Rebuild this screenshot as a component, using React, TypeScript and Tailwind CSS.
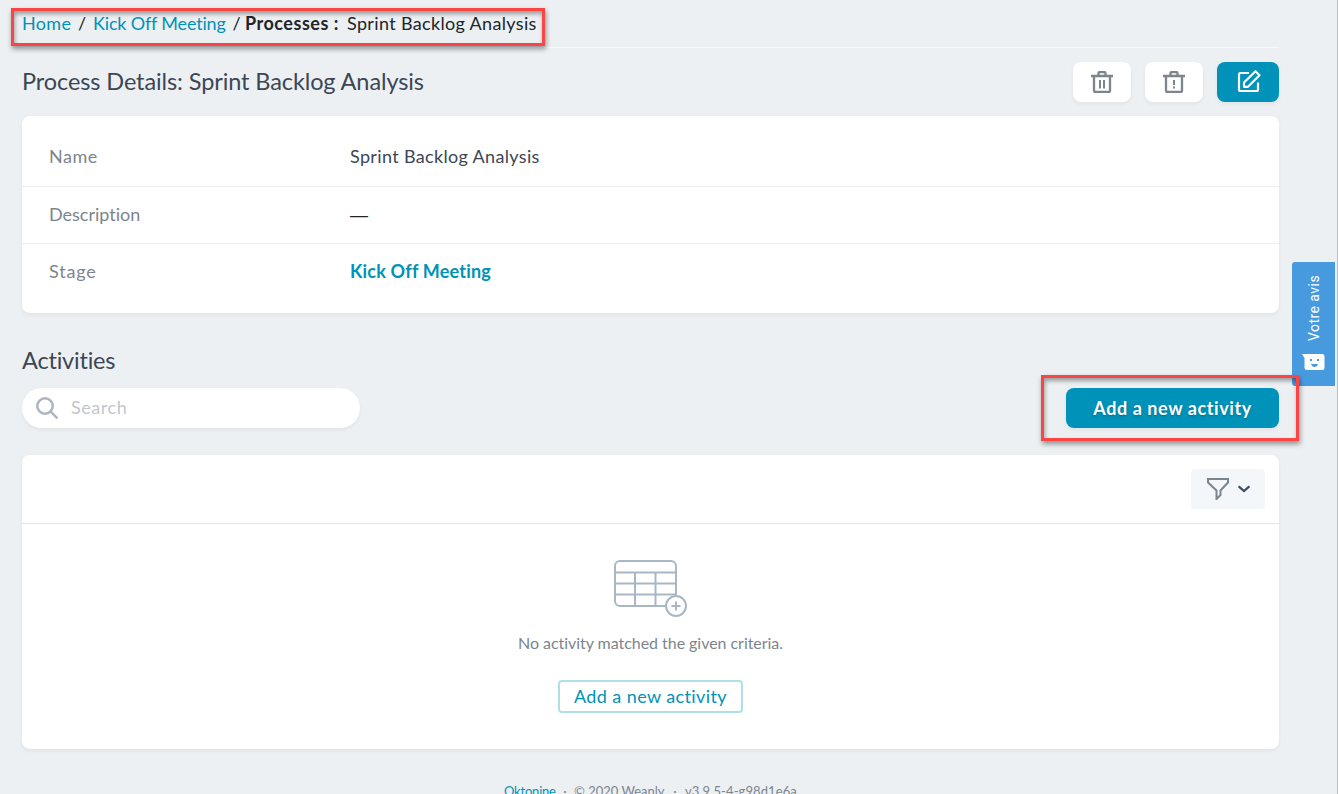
import React from "react";

function TrashIcon({ alert = false }: { alert?: boolean }) {
  return (
    <svg width="22" height="22" viewBox="0 0 22 22" fill="none" stroke="#7c858e" strokeWidth="2.3">
      <path d="M0 5h22M3 5v14.500q0 1.500 1.500 1.500h13q1.500 0 1.500-1.500V5M7.500 5V2.500q0-1.500 1.500-1.500h4q1.500 0 1.500 1.500V5" />
      {alert ? <path strokeWidth="2" d="M11 9v5M11 15.500v2" /> : <path strokeWidth="2" d="M9 9v8.500M13 9v8.500" />}
    </svg>
  );
}

function EditIcon() {
  return (
    <svg className="ml-[2px]" width="24" height="24" viewBox="0 0 24 24" fill="none" stroke="#fff" strokeWidth="2.2" strokeLinejoin="round">
      <path d="M12 3H3.500Q2 3 2 4.500v15Q2 21 3.500 21h16q1.500 0 1.500-1.500V12.500" />
      <path d="M7 16.800v-4.300L18.500 1.200l4 4L11 16.800z" />
    </svg>
  );
}

function Row({ label, className, children }: { label: React.ReactNode; className: string; children: React.ReactNode }) {
  return (
    <div className={`flex px-[27px] pt-[14px] text-[18px] leading-[27px] ${className}`}>
      <div className="w-[301px] text-[#7c858e]">{label}</div>
      <div>{children}</div>
    </div>
  );
}

export default function App() {
  return (
    <div className="relative h-[794px] w-[1338px] overflow-hidden border-r border-[#bfc1c3] bg-[#ecf0f3] font-['Lato',sans-serif] text-[#212529] [font-variant-ligatures:none]">
      <main className="ml-[22px] w-[1257px]">
        <nav className="flex h-[48px] border-b border-[#f6f8fa] pt-[10px] text-[18px] leading-[27px] whitespace-pre">
          <span className="w-[49px] tracking-[0.350px] text-[#0092b8]">Home</span>
          <span className="w-[22px] text-center">/</span>
          <span className="w-[135px] tracking-[-0.170px] text-[#0092b8]">Kick Off Meeting</span>
          <span className="w-[17px] text-center">/</span>
          <b className="w-[94px] tracking-[0.510px]">Processes :</b>
          <span className="ml-[8px] tracking-[0.340px]">Sprint Backlog Analysis</span>
        </nav>
        <header className="mt-[14px] flex h-[40px] items-center">
          <h1 className="mb-[2px] flex-1 text-[23.500px] leading-[38px] tracking-[-0.100px] text-[#3c4655]">Process Details: Sprint Backlog Analysis</h1>
          <div className="flex gap-[14px]">
            <button className="flex h-[40px] w-[58px] items-center justify-center rounded-[8px] bg-white shadow-[0_2px_4px_#0000000d]"><TrashIcon /></button>
            <button className="flex h-[40px] w-[58px] items-center justify-center rounded-[8px] bg-white shadow-[0_2px_4px_#0000000d]"><TrashIcon alert /></button>
            <button className="flex h-[40px] w-[62px] items-center justify-center rounded-[8px] bg-[#0092b8] shadow-[0_2px_4px_#0000000d]"><EditIcon /></button>
          </div>
        </header>
        <section className="mt-[14px] h-[197px] rounded-[8px] bg-white pt-[13px] shadow-[0_2px_4px_#0000000d]">
          <Row label={<span className="tracking-[0.500px]">Name</span>} className="h-[58px] border-b border-[#eceeef]"><span className="tracking-[0.340px] text-[#3c4655]">Sprint Backlog Analysis</span></Row>
          <Row label={<span>Description</span>} className="h-[57px] border-b border-[#eceeef]"><span className="font-['Liberation_Sans',sans-serif]">—</span></Row>
          <Row label={<span className="tracking-[0.800px]">Stage</span>} className="h-[56px]"><b className="tracking-[0.200px] text-[#0092b8]">Kick Off Meeting</b></Row>
        </section>
        <h2 className="mt-[29px] text-[23.500px] leading-[36px] tracking-[-0.200px] text-[#3c4655]">Activities</h2>
        <div className="mt-[10px] flex h-[40px] justify-between">
          <div className="flex w-[338px] items-center rounded-full bg-white pl-[14px] text-[18px] text-[#c2c6cb] shadow-[0_2px_4px_#0000000d]">
            <svg width="22" height="22" viewBox="0 0 22 22" fill="none" stroke="#aeb5bc" strokeWidth="2.500"><circle cx="9" cy="9" r="7.750" /><path d="m14.700 14.700 6.800 6.800" /></svg>
            <span className="mb-[1px] ml-[13px] tracking-[0.550px]">Search</span>
          </div>
          <button className="w-[213px] rounded-[8px] bg-[#0092b8] text-[18px] font-bold tracking-[0.580px] text-white shadow-[0_2px_4px_#0000000d] [text-shadow:0_1px_2px_#00000040]">Add a new activity</button>
        </div>
        <section className="mt-[27px] h-[294px] rounded-[8px] bg-white shadow-[0_2px_4px_#0000000d]">
          <div className="flex h-[69px] justify-end border-b border-[#e3e7eb] pt-[14px] pr-[14px]">
            <button className="flex h-[40px] w-[74px] items-center justify-center gap-[9px] rounded-[4px] bg-[#f3f7fa]">
              <svg width="22" height="22" viewBox="0 0 22 22" fill="none" stroke="#7c858e" strokeWidth="2"><path d="M1 1h20v3.500l-7.500 8v4.500l-4 4v-8.500L1 4.500z" /></svg>
              <svg width="12" height="8" viewBox="0 0 12 8" fill="none" stroke="#3c4b5f" strokeWidth="2.200"><path d="m.6 1.300 5.400 4.700 5.400-4.700" /></svg>
            </button>
          </div>
          <div className="flex flex-col items-center pt-[36px]">
            <svg width="73" height="57" viewBox="0 0 73 57" fill="none" stroke="#a9b7c4" strokeWidth="2"><rect x="1" y="1" width="61" height="45" rx="5" /><path d="M1 12.500h61M1 23.500h61M1 34.500h61M21 12.500V46M41.500 12.500V46" /><circle cx="62" cy="46" r="10" fill="#fff" /><path d="M57.500 46h9M62 41.500v9" /></svg>
            <p className="mt-[14px] text-[16px] leading-[24px] tracking-[-0.040px] text-[#7c858e]">No activity matched the given criteria.</p>
            <button className="mt-[25px] h-[33px] w-[185px] rounded-[4px] border-2 border-[#aee0e8] text-[18px] leading-[27px] tracking-[0.400px] text-[#0092b8]">Add a new activity</button>
          </div>
        </section>
        <footer className="mt-[32px] flex pl-[482px] text-[13px] leading-[20px] whitespace-pre text-[#7c858e]">
          <span className="w-[52px] tracking-[-0.200px] text-[#0092b8]">Oktonine</span><span className="w-[18px] text-center">·</span><span className="w-[91px]">© 2020 Weanly</span><span className="w-[20px] text-center">·</span><span className="tracking-[0.100px]">v3.9.5-4-g98d1e6a</span>
        </footer>
      </main>
      <aside className="absolute top-[262px] left-[1292px] flex h-[124px] w-[43px] flex-col items-center rounded-l-[3px] bg-[#489adf] pt-[12px] text-white">
        <span className="h-[67px] rotate-180 font-['Roboto',sans-serif] text-[14px] leading-[20px] tracking-[0.450px] [writing-mode:vertical-rl]">Votre avis</span>
        <svg className="mt-[13px]" width="23" height="17" viewBox="0 0 23 17"><path fill="#fff" d="M0 0h20q2.500 0 2.500 2.500v11q0 2.500-2.500 2.500H5q-2.500 0-2.500-2.500V4z" /><path fill="#489adf" d="M8 5h2v2H8zM15 5h2v2h-2zM9 10h7q-1 3-3.500 3T9 10z" /></svg>
      </aside>
      <div className="absolute top-[8px] left-[11px] h-[38px] w-[534px] border-[3px] border-[#fb4444] shadow-[1px_3px_5px_#00000066,inset_1px_3px_4px_#00000059]" />
      <div className="absolute top-[375px] left-[1041px] h-[66px] w-[258px] border-[3px] border-[#fb4444] shadow-[1px_3px_5px_#00000066,inset_1px_3px_4px_#00000059]" />
    </div>
  );
}
